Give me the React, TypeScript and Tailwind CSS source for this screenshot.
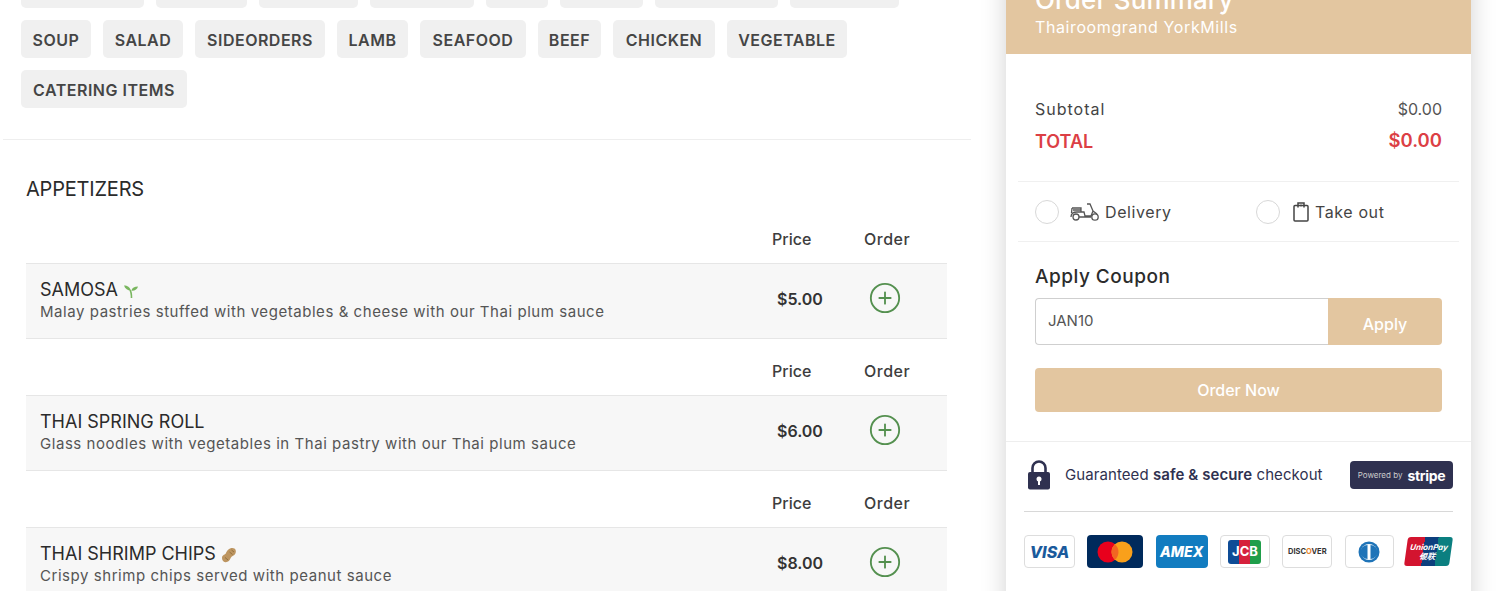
import { CirclePlus } from 'lucide-react';

const font = { fontFamily: 'Inter, "Noto Sans", sans-serif' };

/* top row is scrolled off, only the bottom edge of its chips shows */
const chips = [
  { w: 'w-[123px]' },
  { w: 'w-[91px]' },
  { w: 'w-[99px]' },
  { w: 'w-[104px]' },
  { w: 'w-[62px]' },
  { w: 'w-[83px]' },
  { w: 'w-[123px]' },
  { w: 'w-[109px]' },
  { w: 'w-[70px]', label: 'SOUP' },
  { w: 'w-[80px]', label: 'SALAD' },
  { w: 'w-[130px]', label: 'SIDEORDERS' },
  { w: 'w-[71px]', label: 'LAMB' },
  { w: 'w-[106px]', label: 'SEAFOOD' },
  { w: 'w-[63px]', label: 'BEEF' },
  { w: 'w-[102px]', label: 'CHICKEN' },
  { w: 'w-[120px]', label: 'VEGETABLE' },
  { w: 'w-[166px]', label: 'CATERING ITEMS' },
];

function Seedling() {
  return (
    <svg width="16" height="16" viewBox="0 0 16 16" className="mt-[2px] shrink-0">
      <path d="M8.5 15 C8.5 11 8 8.5 7 7" fill="none" stroke="#79b65f" strokeWidth="1.6" />
      <path d="M7.6 7.6 C5 7.6 2 6 1 2.5 C4.5 2.5 7 4 7.6 7.6 Z" fill="#79b65f" />
      <path d="M8.4 7.8 C9 5 11.5 3.6 15 3.6 C14.4 6.4 11.6 8.2 8.4 7.8 Z" fill="#79b65f" />
    </svg>
  );
}

function Peanut() {
  return (
    <svg width="16" height="16" viewBox="0 0 16 16" className="mt-[2px] shrink-0">
      <path d="M1 11 C1 8.5 3.4 8 4.8 6.6 C5.8 3.6 8 1 11.4 1 C14.6 1 15.6 4 14.4 6.6 C13.2 9 11 9 9.8 10.8 C8.8 13.6 7 15.4 4.4 15.2 C2.2 15 1 13.2 1 11 Z" fill="#bd9560" />
      <path d="M4 10.5 L7 13 M8.5 5 L11.5 7.5 M10.5 3 L13 5" stroke="#94713f" strokeWidth="1" />
    </svg>
  );
}

const menu = [
  { name: 'SAMOSA', badge: <Seedling />, desc: 'Malay pastries stuffed with vegetables & cheese with our Thai plum sauce', price: '$5.00' },
  { name: 'THAI SPRING ROLL', desc: 'Glass noodles with vegetables in Thai pastry with our Thai plum sauce', price: '$6.00' },
  { name: 'THAI SHRIMP CHIPS', badge: <Peanut />, desc: 'Crispy shrimp chips served with peanut sauce', price: '$8.00' },
];

function MenuItem({ name, badge, desc, price }: (typeof menu)[number]) {
  return (
    <div>
      <div className="flex h-[56px] items-end pb-[12px] text-[16px] font-medium text-[#3d3d3d]">
        <span className="ml-[746px] w-[92px]">Price</span>
        <span className="tracking-[0.5px]">Order</span>
      </div>
      <div className="flex h-[76px] items-center border-y border-[#e6e6e6] bg-[#f7f7f7] pl-[14px]">
        <div className="w-[737px]">
          <div className="flex items-center gap-[5px] text-[18px] leading-[22px] text-[#2b2b2b]">
            {name} {badge}
          </div>
          <div className="text-[15px] leading-[22px] tracking-[0.55px] text-[#555]">{desc}</div>
        </div>
        <span className="w-[91px] pb-[5px] text-[16px] font-semibold text-[#333]">{price}</span>
        <CirclePlus size={34} strokeWidth={1.3} className="mb-[6px] text-[#54904f]" />
      </div>
    </div>
  );
}

function Scooter() {
  return (
    <svg width="30" height="20" viewBox="0 0 30 20" fill="none" stroke="#555" strokeWidth="1.3">
      <circle cx="6" cy="15" r="3" />
      <circle cx="25" cy="15" r="3.2" />
      <path d="M1 15 C1 11 3 10 7 10 L14 10 L15 14 L21 14 L23 9 L20 2 L17 2 M2 6 L11 6 L11 10 M2 6 L1.5 11 M3 8 L11 8 M9 15 L21 15 M23 9 L27 12" />
    </svg>
  );
}

function Clip() {
  return (
    <svg width="16" height="20" viewBox="0 0 16 20" fill="none" stroke="#444" strokeWidth="1.5">
      <rect x="1" y="3.5" width="14" height="15.5" rx="1" />
      <path d="M5 5.5 V1 H11 V5.5 M7 3.5 H9" />
    </svg>
  );
}

function Lock() {
  return (
    <svg width="24" height="30" viewBox="0 0 24 30">
      <path d="M5.5 14 V8 A6.5 6.5 0 0 1 18.5 8 V14" fill="none" stroke="#2f3150" strokeWidth="2.6" />
      <rect x="1" y="12" width="22" height="17.5" rx="2" fill="#2f3150" />
      <circle cx="12" cy="19" r="2.5" fill="#fff" />
      <rect x="11" y="20" width="2" height="5" fill="#fff" />
    </svg>
  );
}

function Card({ className, children }: { className: string; children: React.ReactNode }) {
  return <div className={`flex h-[33px] items-center justify-center rounded-[4px] ${className}`}>{children}</div>;
}

export default function App() {
  return (
    <div className="h-[591px] overflow-hidden bg-white" style={font}>
      <div className="-mt-[30px] flex">
        {/* menu column */}
        <div className="w-[971px] shrink-0 pl-[3px]">
          <div className="flex w-[900px] flex-wrap gap-x-3 gap-y-3 pl-[18px]">
            {chips.map((c, i) => (
              <div key={i} className={`flex h-[38px] items-center justify-center rounded-[5px] bg-[#f0f0f0] pt-[2px] text-[16px] font-semibold tracking-[0.5px] whitespace-nowrap text-[#454545] ${c.w}`}>
                {c.label}
              </div>
            ))}
          </div>
          <div className="mt-[31px] border-t border-[#eeeeee]" />
          <div className="w-[944px] pl-[23px]">
            <h2 className="mt-[35px] text-[20px] leading-[28px] font-normal tracking-[-0.2px] text-[#2b2b2b]">APPETIZERS</h2>
            <div className="mt-[4px] flex flex-col">
              {menu.map((m) => (
                <MenuItem key={m.name} {...m} />
              ))}
            </div>
          </div>
        </div>

        {/* order summary */}
        <div className="ml-[35px] h-[700px] w-[465px] shrink-0 bg-white shadow-[0_0_24px_rgba(0,0,0,0.18)]">
          <div className="h-[84px] bg-[#e3c6a0] pt-[14px] pl-[29px] text-white">
            <div className="text-[26px] leading-[32px] font-medium tracking-[0.15px]">Order Summary</div>
            <div className="-mt-[1px] text-[16px] leading-[24px] tracking-[0.6px]">Thairoomgrand YorkMills</div>
          </div>

          <div className="px-[29px] pt-[43px] pb-[28px]">
            <div className="flex h-[24px] items-center justify-between text-[16px] text-[#444]">
              <span className="tracking-[1px]">Subtotal</span>
              <span className="text-[#555]">$0.00</span>
            </div>
            <div className="mt-[8px] flex h-[24px] items-center justify-between font-semibold text-[#dc3f45]">
              <span className="text-[18px]">TOTAL</span>
              <span className="text-[18.5px]">$0.00</span>
            </div>
          </div>

          <div className="mx-[12px] flex h-[61px] items-center border-y border-[#f0f0f0] pl-[17px] text-[16px] tracking-[0.6px] text-[#444]">
            <span className="h-[24px] w-[24px] rounded-full border border-[#d8d8d8]" />
            <span className="ml-[11px] flex w-[186px] items-center gap-[5px]">
              <Scooter /> Delivery
            </span>
            <span className="h-[24px] w-[24px] rounded-full border border-[#d8d8d8]" />
            <span className="ml-[13px] flex items-center gap-[6px]">
              <Clip /> Take out
            </span>
          </div>

          <div className="px-[29px] pt-[21px]">
            <div className="text-[19px] leading-[28px] font-medium tracking-[0.5px] text-[#2b2b2b]">Apply Coupon</div>
            <div className="mt-[7px] flex h-[47px]">
              <div className="flex w-[293px] items-center rounded-l-[4px] border border-r-0 border-[#cfcfcf] pb-[1px] pl-[12px] text-[15px] text-[#555]">JAN10</div>
              <div className="flex flex-1 items-center justify-center rounded-r-[4px] bg-[#e3c6a0] pt-[5px] text-[16px] font-medium text-white">Apply</div>
            </div>
            <div className="mt-[23px] flex h-[44px] items-center justify-center rounded-[4px] bg-[#e3c6a0] text-[16px] font-medium text-white">Order Now</div>
          </div>

          <div className="mt-[29px] border-t border-[#eeeeee] px-[18px]">
            <div className="flex h-[70px] items-center border-b border-[#d8d8d8] pb-[3px]">
              <div className="ml-[3px]"><Lock /></div>
              <div className="ml-[14px] flex-1 text-[15px] tracking-[0.08px] text-[#2f3150]">
                Guaranteed <span className="font-semibold">safe &amp; secure</span> checkout
              </div>
              <div className="flex h-[28px] w-[103px] items-center justify-center gap-[5px] rounded-[4px] bg-[#2f3150] text-white">
                <span className="text-[8px] text-[#ccc]">Powered by</span>
                <span className="text-[14px] font-bold tracking-[-0.3px]">stripe</span>
              </div>
            </div>
            <div className="mt-[23px] flex justify-between">
              <Card className="w-[51px] border border-[#dddddd]">
                <span className="text-[16px] font-extrabold text-[#1a5a9c] italic">VISA</span>
              </Card>
              <Card className="w-[56px] bg-[#002a5c]">
                <svg width="36" height="22" viewBox="0 0 36 22">
                  <circle cx="11" cy="11" r="10.5" fill="#e8001c" />
                  <circle cx="25" cy="11" r="10.5" fill="#f9a01b" />
                  <path d="M18 3.2 A10.5 10.5 0 0 1 18 18.8 A10.5 10.5 0 0 1 18 3.2Z" fill="#f26522" />
                </svg>
              </Card>
              <Card className="w-[52px] bg-[#127cc0]">
                <span className="text-[14px] font-extrabold text-white italic">AMEX</span>
              </Card>
              <Card className="w-[50px] border border-[#dddddd]">
                <span className="flex h-[24px] w-[33px] items-center justify-center rounded-[3px] bg-[linear-gradient(90deg,#0e4c96_0_33%,#d6213c_33%_66%,#1f9e4a_66%)] text-[13px] font-bold text-white">JCB</span>
              </Card>
              <Card className="w-[50px] border border-[#dddddd]">
                <span className="text-[7.5px] font-bold text-[#333]">
                  DISC<span className="text-[#e8842a]">O</span>VER
                </span>
              </Card>
              <Card className="w-[49px] border border-[#dddddd]">
                <svg width="28" height="22" viewBox="0 0 28 22">
                  <circle cx="14" cy="11" r="10.5" fill="#1f74b8" />
                  <circle cx="14" cy="11" r="8" fill="#fff" />
                  <path d="M12.5 4 A7 7 0 0 0 12.5 18Z M15.5 4 A7 7 0 0 1 15.5 18Z" fill="#1f74b8" />
                </svg>
              </Card>
              <div className="mr-[2px] flex h-[29px] w-[45px] skew-x-[-8deg] items-center justify-center self-center rounded-[3px] bg-[linear-gradient(90deg,#d3142f_0_38%,#0d3f7d_38%_68%,#0b7f80_68%)] text-center text-[8px] leading-[9px] font-bold text-white italic">
                UnionPay 银联
              </div>
            </div>
          </div>
        </div>
      </div>
    </div>
  );
}
